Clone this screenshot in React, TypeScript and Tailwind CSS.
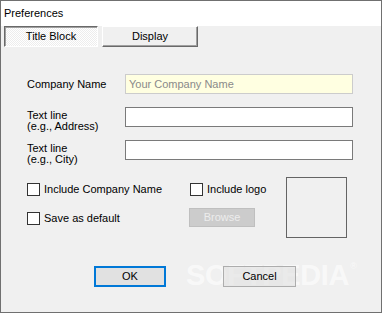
import React from "react";

const font = { fontFamily: '"Liberation Sans", Arial, sans-serif' };

function Checkbox({ label }: { label: string }) {
  return (
    <div className="flex items-center gap-[4px]">
      <div className="w-[13px] h-[13px] border border-[#333333] bg-white shrink-0" />
      <span className="text-[11px] leading-[13px] text-black">{label}</span>
    </div>
  );
}

export default function App() {
  return (
    <div
      className="relative w-[382px] h-[313px] border border-[#707070] bg-[#f0f0f0] flex flex-col overflow-hidden"
      style={font}
    >
      <div className="h-[25px] bg-white flex items-center pl-[3px] text-[11px] text-black shrink-0">
        Preferences
      </div>

      <div className="flex pl-[3px] gap-[4px] h-[21px] shrink-0">
        <div className="w-[94px] h-full flex items-center justify-center text-[11px] text-black border-t border-l border-[#696969] border-r border-b border-r-white border-b-white shadow-[inset_1px_1px_0_#a0a0a0] bg-[repeating-conic-gradient(#ffffff_0_25%,#ededed_0_50%)] bg-[length:2px_2px]">
          Title Block
        </div>
        <div className="w-[96px] h-full flex items-center justify-center text-[11px] text-black border-t border-l border-white border-r border-b border-r-[#696969] border-b-[#696969] shadow-[inset_-1px_-1px_0_#a0a0a0] bg-[#f0f0f0]">
          Display
        </div>
      </div>

      <div className="flex flex-col pl-[26px] mt-[27px]">
        <div className="flex items-center h-[20px]">
          <div className="w-[98px] text-[11px] text-black">Company Name</div>
          <div className="w-[228px] h-[20px] border border-[#cccccc] bg-[#ffffe1] flex items-center pl-[3px] text-[11px] text-[#8a8a8a]">
            Your Company Name
          </div>
        </div>

        <div className="flex items-start mt-[13px]">
          <div className="w-[98px] pt-[3px] text-[11px] leading-[11px] text-black">
            Text line
            <br />
            (e.g., Address)
          </div>
          <div className="w-[228px] h-[20px] border border-[#7a7a7a] bg-white" />
        </div>

        <div className="flex items-start mt-[8px]">
          <div className="w-[98px] pt-[3px] text-[11px] leading-[11px] text-black">
            Text line
            <br />
            (e.g., City)
          </div>
          <div className="w-[228px] h-[20px] border border-[#7a7a7a] bg-white" />
        </div>

        <div className="flex items-start mt-[12px]">
          <div className="w-[162px] flex flex-col pt-[6px] gap-[16px]">
            <Checkbox label="Include Company Name" />
            <Checkbox label="Save as default" />
          </div>
          <div className="w-[97px] flex flex-col pt-[6px]">
            <div className="pl-[1px]">
              <Checkbox label="Include logo" />
            </div>
            <div className="mt-[12px] w-[66px] h-[19px] bg-[#cccccc] border border-[#bfbfbf] flex items-center justify-center text-[11px] text-[#ececec]">
              Browse
            </div>
          </div>
          <div className="w-[61px] h-[61px] border border-[#646464]" />
        </div>

        <div className="flex mt-[28px] pl-[67px] gap-[57px]">
          <div className="w-[72px] h-[21px] border-2 border-[#0078d7] bg-[#e1e1e1] flex items-center justify-center text-[11px] text-black">
            OK
          </div>
          <div className="relative z-10 w-[73px] h-[21px] border border-[#adadad] bg-[#e1e1e1]/60 flex items-center justify-center text-[11px] text-black">
            Cancel
          </div>
        </div>
      </div>

      <div
        aria-hidden="true"
        className="absolute left-[185px] top-[258px] pointer-events-none select-none flex items-start text-white/60 font-bold text-[29px] leading-[32px] tracking-[-0.3px]"
      >
        SOFTPEDIA
        <span className="text-[9px] leading-[10px] font-normal mt-[2px] ml-[1px]">®</span>
      </div>
    </div>
  );
}
